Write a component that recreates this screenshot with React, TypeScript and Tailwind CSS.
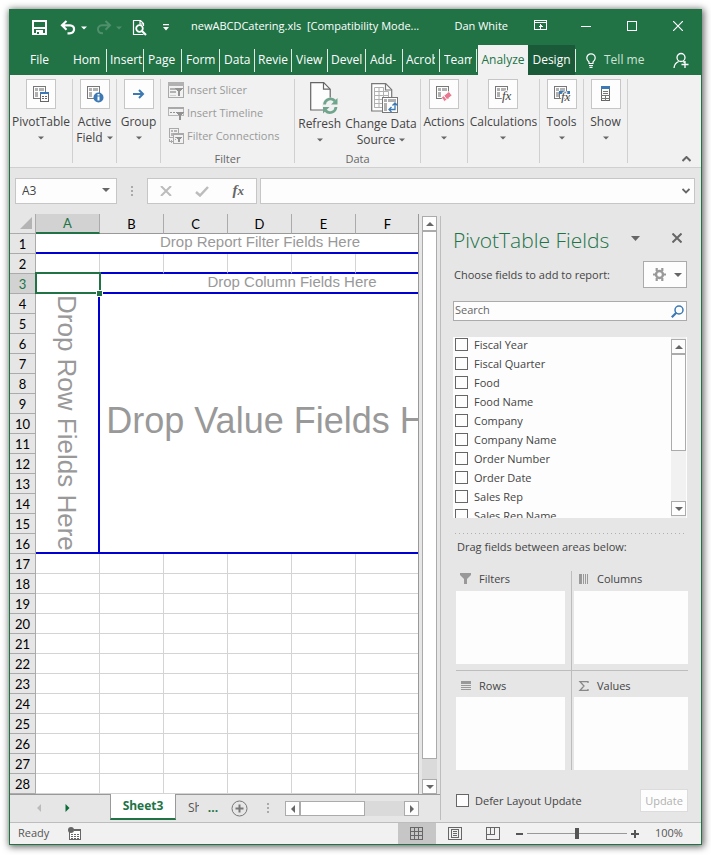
import React from "react";

const UI = "font-['Open_Sans','Noto_Sans',sans-serif]";

type P = { children?: React.ReactNode; className?: string };

/* ---------- small shared pieces ---------- */

function Caret({ className = "text-[#666]" }: { className?: string }) {
  return (
    <svg className={`inline-block shrink-0 ${className}`} width="6" height="4" viewBox="0 0 6 4" fill="currentColor" aria-hidden="true">
      <path d="M0 0.5h6L3 3.5z" />
    </svg>
  );
}

function BigCaret({ className = "text-[#666]" }: { className?: string }) {
  return (
    <svg className={`shrink-0 ${className}`} width="9" height="5" viewBox="0 0 9 5" fill="currentColor" aria-hidden="true">
      <path d="M0 0h9L4.5 5z" />
    </svg>
  );
}

function PivotGrid({ children }: P) {
  return (
    <svg width="18" height="18" viewBox="0 0 18 18" aria-hidden="true">
      <g shapeRendering="crispEdges">
        <path d="M1.5 1.5h12v12h-12z" fill="#fdfdfd" stroke="#777" />
        <path d="M3 3h3v3H3zM7 3h5v3H7zM3 7h3v5H3z" fill="#b1b1b1" />
      </g>
      {children}
    </svg>
  );
}

function Fx({ x, y, size }: { x: number; y: number; size: number }) {
  return (
    <text x={x} y={y} fontSize={size} fontStyle="italic" fill="#444" stroke="#fdfdfd" strokeWidth="2" paintOrder="stroke" className="font-['Liberation_Serif',serif]">
      fx
    </text>
  );
}

/* ---------- title bar ---------- */

function TitleBar() {
  return (
    <header className="flex h-[35px] items-center text-white">
      <button aria-label="Save" className="ml-[22px]">
        <svg width="15" height="15" viewBox="0 0 15 15" fill="none" stroke="#fff" shapeRendering="crispEdges">
          <path d="M1 1h13v13H1z" strokeWidth="2" />
          <path d="M2 7h11v2H2z" fill="#fff" stroke="none" />
          <path d="M4 10h7v4H4z" fill="#fff" stroke="none" />
          <path d="M5 11.5h2v2.5H5z" fill="#217346" stroke="none" />
        </svg>
      </button>
      <button aria-label="Undo" className="ml-[13px]">
        <svg width="16" height="15" viewBox="0 0 16 15" fill="none" stroke="#fff" strokeWidth="2.2">
          <path d="M6.5 1 2 5.3l4.500 4.500M2.500 5.300H10c5.500 0 5.500 8-.500 8H7.500" />
        </svg>
      </button>
      <button aria-label="Undo history" className="ml-[5px] flex"><Caret className="text-white" /></button>
      <button aria-label="Redo" className="ml-[9px]">
        <svg width="16" height="15" viewBox="0 0 16 15" fill="none" stroke="#4f8f6b" strokeWidth="2">
          <path d="M9.500 1 14 5.300 9.500 9.800M13.500 5.300H6c-5.500 0-5.500 8 .500 8H7" />
        </svg>
      </button>
      <button aria-label="Redo history" className="ml-[4px] flex"><Caret className="text-[#4f8f6b]" /></button>
      <button aria-label="Print preview" className="ml-[10px]">
        <svg width="15" height="17" viewBox="0 0 15 17" fill="none" stroke="#fff">
          <path d="M11.500 15.500H1.500v-14h7l3 3V7M8 1.500V5h3.500" strokeWidth="1.200" />
          <circle cx="7.500" cy="9.500" r="3.300" strokeWidth="1.800" />
          <path d="m10 12 4 4" strokeWidth="2.200" />
        </svg>
      </button>
      <button aria-label="Customize toolbar" className="ml-[16px]">
        <svg width="6" height="7" viewBox="0 0 6 7" fill="#fff"><path d="M0 0h6v1.200H0zM0 3h6L3 6.500z" /></svg>
      </button>
      <h1 className="ml-[22px] whitespace-pre pb-1 text-[11px] leading-4">newABCDCatering.xls  [Compatibility Mode...</h1>
      <div className="flex-1" />
      <div className="flex items-center pb-1">
        <button className="mr-[26px] whitespace-nowrap text-[11px] leading-4">Dan White</button>
        <button aria-label="Ribbon display options" className="mr-[34px]">
          <svg width="13" height="11" viewBox="0 0 13 11" fill="none" stroke="#fff" shapeRendering="crispEdges">
            <path d="M.500.500h12v9H.500zM.500 2.500h12" /><path d="M6.500 4v5M4.500 6.500h4M5.500 5.500h2" />
          </svg>
        </button>
        <button aria-label="Minimize" className="mr-9"><svg width="10" height="10" viewBox="0 0 10 10" shapeRendering="crispEdges"><path d="M0 5h10v1H0z" fill="#fff" /></svg></button>
        <button aria-label="Maximize" className="mr-9"><svg width="10" height="10" viewBox="0 0 10 10" fill="none" stroke="#fff" shapeRendering="crispEdges"><path d="M.500.500h9v9h-9z" /></svg></button>
        <button aria-label="Close" className="mr-[18px]"><svg width="10" height="10" viewBox="0 0 10 10" stroke="#fff" strokeWidth="1.200"><path d="m0 0 10 10M10 0 0 10" /></svg></button>
      </div>
    </header>
  );
}

/* ---------- ribbon tabs ---------- */

const tabs: [string, string][] = [
  ["Hom", "w-[38px] pl-1"],
  ["Insert", "w-[37px] pl-[3px]"],
  ["Page", "w-[38px] pl-1"],
  ["Form", "w-[38px] pl-1"],
  ["Data", "w-[35px] pl-1"],
  ["Revie", "w-[37px] pl-[3px]"],
  ["View", "w-[36px] pl-1"],
  ["Devel", "w-[38px] pl-[3px]"],
  ["Add-", "w-[37px] pl-1"],
  ["Acrob", "w-[37px] pl-[3px] pr-1"],
  ["Team", "w-[37px] pl-1 pr-1"],
];

function RibbonTabs() {
  return (
    <nav className="flex h-[30px] items-center text-[12px] leading-4 text-white">
      <button className="w-[59px]">File</button>
      {tabs.map(([label, box]) => (
        <button key={label} className={`h-[23px] shrink-0 border-r border-[#dfeae3] text-left ${box}`}>
          <span className="block overflow-hidden whitespace-nowrap">{label}</span>
        </button>
      ))}
      <button className="ml-px h-full w-[50px] shrink-0 bg-[#f1f1f1] text-center text-[#217346]">Analyze</button>
      <button className="h-full w-[47px] shrink-0 bg-[#1b5a38] text-center">Design</button>
      <span className="h-[23px] w-px bg-[#dfeae3]" />
      <button className="ml-[10px] flex items-center gap-2 whitespace-nowrap text-[#cfe3d7]">
        <svg width="10" height="15" viewBox="0 0 10 15" fill="none" stroke="#fff" strokeWidth="1.200">
          <path d="M3 10.500V9C1.500 7.800.800 6.800.800 5a4.200 4.200 0 0 1 8.400 0c0 1.800-.700 2.800-2.200 4v1.500zM3 12.500h4M3.500 14.300h3" />
        </svg>
        Tell me
      </button>
      <div className="flex-1" />
      <button aria-label="Share" className="mr-3">
        <svg width="16" height="17" viewBox="0 0 16 17" fill="none" stroke="#fff" strokeWidth="1.300">
          <circle cx="8" cy="5.500" r="4" /><path d="M1 16c.400-3.500 2-5.500 4.700-6.500M10 9.500l1.500 1M8.500 12.500h7M12 9v7" />
        </svg>
      </button>
    </nav>
  );
}

/* ---------- ribbon ---------- */

function Group({ children, className }: P) {
  return <section className={`flex h-[84px] shrink-0 justify-center border-r border-[#d0d0d0] ${className}`}>{children}</section>;
}

function BoxButton({ icon, lines }: { icon: React.ReactNode; lines: string[] }) {
  return (
    <button className="flex flex-col items-center self-start whitespace-nowrap text-[12px] leading-4">
      <span className="mb-[5px] flex h-[30px] w-[30px] items-center justify-center border border-[#c6c6c6] bg-[#fdfdfd]">{icon}</span>
      <span>{lines[0]}</span>
      <span className="flex h-4 items-center gap-1">{lines[1]}<Caret /></span>
    </button>
  );
}

function GroupLabel({ children }: P) {
  return <span className="text-center text-[11px] leading-2 text-[#666]">{children}</span>;
}

const filterItems = [
  {
    label: "Insert Slicer",
    icon: (
      <svg width="16" height="16" viewBox="0 0 16 16" shapeRendering="crispEdges">
        <path d="M.500.500h15v15H.500z" fill="#f1f1f1" stroke="#a9a9a9" /><path d="M0 0h16v4H0zM2 6h6v2H2zM2 9h6v2H2z" fill="#b1b1b1" />
        <path d="M2 13h6v1H2z" fill="#d0d0d0" />
        <path d="M7 6h8v1h-1v1h-1v1h-1v5h-2V9H9V8H8V7H7z" fill="#929292" />
      </svg>
    ),
  },
  {
    label: "Insert Timeline",
    icon: (
      <svg width="16" height="16" viewBox="0 0 16 16" shapeRendering="crispEdges">
        <path d="M.500 2.500h15v8H.500z" fill="#f1f1f1" stroke="#b5b5b5" /><path d="M0 2h16v2H0z" fill="#a9a9a9" />
        <path d="M2 7h2v1H2zM5 7h2v1H5zM8 7h2v1H8z" fill="#929292" />
        <path d="M8 7h8v1h-1v1h-1v1h-1v5h-2v-5h-1V9H9V8H8z" fill="#929292" />
      </svg>
    ),
  },
  {
    label: "Filter Connections",
    icon: (
      <svg width="16" height="16" viewBox="0 0 16 16" shapeRendering="crispEdges">
        <path d="M1.500.500h9v9h-9z" fill="#f1f1f1" stroke="#a9a9a9" /><path d="M3 2h2v2H3zM6 2h3v2H6zM3 5h2v3H3z" fill="#b5b5b5" />
        <path d="M5.500 5.500h10v10h-10z" fill="#f1f1f1" stroke="#a9a9a9" /><path d="M5 5h11v2H5zM7 9h1v1H7zM7 11h1v1H7z" fill="#a9a9a9" />
        <path d="M8 9h6v1h-1v1h-1v3h-2v-3H9v-1H8z" fill="#929292" /><path d="M1.500 11v2.500h3M3.500 12v3" fill="none" stroke="#a9a9a9" />
      </svg>
    ),
  },
];

function Ribbon() {
  return (
    <div className="flex h-[93px] border-b border-[#d0d0d0] bg-[#f1f1f1] pt-1 text-[#444]">
      <Group className="w-[63px]">
        <BoxButton lines={["PivotTable"]} icon={
          <PivotGrid>
            <g shapeRendering="crispEdges"><path d="M8.500 7.500h8v9h-8z" fill="#fdfdfd" stroke="#666" /><path d="M8 7h9v2H8z" fill="#3c78b4" /><path d="M10 11h2v1h-2zM13 11h2v1h-2zM10 13h2v1h-2zM13 13h2v1h-2z" fill="#666" /></g>
          </PivotGrid>} />
      </Group>
      <Group className="w-[44px]">
        <BoxButton lines={["Active", "Field"]} icon={
          <PivotGrid>
            <circle cx="12.500" cy="12.500" r="5" fill="#3c78b4" /><path d="M11.500 11.500h2v4h-2zM11.500 9h2v1.500h-2z" fill="#fff" />
          </PivotGrid>} />
      </Group>
      <Group className="w-[44px]">
        <BoxButton lines={["Group"]} icon={
          <svg width="12" height="10" viewBox="0 0 12 10" fill="none" stroke="#3c78b4" strokeWidth="2"><path d="M0 5h10M6 1l4 4-4 4" /></svg>} />
      </Group>
      <Group className="w-[134px] flex-col">
        <div className="-mt-px flex flex-1 flex-col pl-[7px] text-[11px] leading-4 text-[#999]">
          {filterItems.map((f) => (
            <button key={f.label} className="flex h-[23px] items-center gap-[3px] whitespace-nowrap">{f.icon}{f.label}</button>
          ))}
        </div>
        <GroupLabel>Filter</GroupLabel>
      </Group>
      <Group className="w-[126px] flex-col">
        <div className="flex flex-1 justify-center gap-1 text-[12px] leading-4">
          <button className="flex flex-col items-center self-start whitespace-nowrap">
            <svg className="mb-[1px] ml-2 mt-[3px]" width="28" height="33" viewBox="0 0 28 33">
              <path d="M.700.700h13l6.500 6.500V28H.700z" fill="#fdfdfd" stroke="#666" strokeWidth="1.200" /><path d="M13.500.700v6.500h6.500" fill="none" stroke="#666" strokeWidth="1.200" />
              <circle cx="20" cy="23.500" r="8" fill="#f1f1f1" />
              <path d="M14.500 22.500a6 6 0 0 1 10.500-3.500M26 25a6 6 0 0 1-10.500 3.500" fill="none" stroke="#6fa58c" strokeWidth="2.800" />
              <path d="M27.500 16v6.500H21zM13 31.500V25h6.500z" fill="#6fa58c" />
            </svg>
            <span>Refresh</span>
            <span className="flex h-4 items-center"><Caret /></span>
          </button>
          <button className="flex flex-col items-center self-start whitespace-nowrap">
            <svg className="mb-[1px] mt-[3px] ml-2" width="28" height="33" viewBox="0 0 28 33">
              <path d="M.700 1.700h14l6 6V29H.700z" fill="#fdfdfd" stroke="#777" strokeWidth="1.200" /><path d="M14.500 1.700V8h6" fill="none" stroke="#777" strokeWidth="1.200" />
              <path d="M3.500 5.500h9v20h-9zM3.500 9.500h14v16h-14M3.500 13.500h14M3.500 17.500h14M3.500 21.500h14M8 5.500v20M12.500 5.500v20" fill="none" stroke="#b0b0b0" />
              <path d="M11.500 15.500h15v15h-15z" fill="#fdfdfd" stroke="#777" shapeRendering="crispEdges" /><path d="M13 17h3v3h-3zM17 17h8v3h-8zM13 21h3v8h-3z" fill="#b0b0b0" />
              <path d="M24 21.500v6h-6M21.500 23.500l2.500-2.500 2.500 2.500M20.500 25l-2.500 2.500 2.500 2.500" fill="none" stroke="#3c78b4" strokeWidth="1.300" />
            </svg>
            <span>Change Data</span>
            <span className="flex h-4 items-center gap-1">Source<Caret /></span>
          </button>
        </div>
        <GroupLabel>Data</GroupLabel>
      </Group>
      <Group className="w-[47px]">
        <BoxButton lines={["Actions"]} icon={
          <PivotGrid><path d="m6.500 12.500 7.500-6 3 4-7.500 6z" fill="#e8798f" stroke="#fdfdfd" strokeWidth=".800" /><path d="m8.800 10.500 3 4" stroke="#fdfdfd" /></PivotGrid>} />
      </Group>
      <Group className="w-[72px]">
        <BoxButton lines={["Calculations"]} icon={<PivotGrid><Fx x={8} y={15} size={13} /></PivotGrid>} />
      </Group>
      <Group className="w-[44px]">
        <BoxButton lines={["Tools"]} icon={<PivotGrid><path d="M6.500 6.500h10v7h-10z" fill="#fdfdfd" stroke="#777" /><path d="M6 6h11v3H6z" fill="#3c78b4" /><Fx x={8} y={16} size={13} /></PivotGrid>} />
      </Group>
      <Group className="w-[44px]">
        <BoxButton lines={["Show"]} icon={
          <svg width="10" height="16" viewBox="0 0 10 16" shapeRendering="crispEdges">
            <path d="M.500.500h8v14h-8z" fill="#fdfdfd" stroke="#666" /><path d="M0 0h9v3H0z" fill="#3c78b4" />
            <path d="M2 5.500h5M2 7.500h5M0 9.500h9M0 12.500h9M4.500 9.500v5" fill="none" stroke="#777" />
          </svg>} />
      </Group>
      <div className="flex-1" />
      <button aria-label="Collapse the ribbon" className="mb-[5px] mr-[10px] self-end">
        <svg width="9" height="6" viewBox="0 0 9 6" fill="none" stroke="#666" strokeWidth="2"><path d="m.500 5 4-4 4 4" /></svg>
      </button>
    </div>
  );
}

/* ---------- formula bar ---------- */

function Dots() {
  return (
    <svg width="2" height="10" viewBox="0 0 2 10" fill="#aaa" shapeRendering="crispEdges" aria-hidden="true"><path d="M0 0h2v2H0zM0 4h2v2H0zM0 8h2v2H0z" /></svg>
  );
}

function FormulaBar() {
  return (
    <div className="flex h-[46px] items-start pl-[5px] pr-[6px] pt-[10px]">
      <div className="flex h-[26px] w-[102px] items-center border border-[#c6c6c6] bg-[#fdfdfd] pr-[6px]">
        <input aria-label="Name Box" defaultValue="A3" className="min-w-0 flex-1 bg-transparent pl-[6px] text-[12px] leading-4 text-[#444] outline-none" />
        <button aria-label="Open name list" className="pb-0.5"><svg width="8" height="4" fill="#666"><path d="M0 0h8L4 4z" /></svg></button>
      </div>
      <div className="flex h-[26px] w-[30px] items-center justify-center"><Dots /></div>
      <div className="flex h-[26px] w-[110px] items-center justify-between border border-[#c6c6c6] bg-[#fdfdfd] px-[12px]">
        <button aria-label="Cancel"><svg width="12" height="10" viewBox="0 0 12 10" stroke="#bcbcbc" strokeWidth="2"><path d="m1 0 10 10M11 0 1 10" /></svg></button>
        <button aria-label="Enter"><svg width="14" height="11" viewBox="0 0 14 11" fill="none" stroke="#bcbcbc" strokeWidth="2.500"><path d="m1 6 4 3.500L13 1" /></svg></button>
        <button aria-label="Insert Function" className="pb-0.5 font-['Liberation_Serif',serif] text-[15px] font-bold italic leading-5 text-[#666]">f<span className="text-[13px]">x</span></button>
      </div>
      <div className="ml-[3px] flex h-[26px] min-w-0 flex-1 items-center border border-[#c6c6c6] bg-[#fdfdfd] pr-1">
        <input aria-label="Formula" className="min-w-0 flex-1 bg-transparent pl-1 text-[12px] outline-none" />
        <button aria-label="Expand formula bar"><svg width="8" height="6" viewBox="0 0 8 6" fill="none" stroke="#666" strokeWidth="1.800"><path d="m.500 1 3.500 3.500L7.500 1" /></svg></button>
      </div>
    </div>
  );
}

/* ---------- worksheet ---------- */

const columns = ["A", "B", "C", "D", "E", "F", ""];
const rows = Array.from({ length: 28 }, (_, i) => i + 1);
const ARIAL = "font-['Liberation_Sans',Arial,sans-serif] text-[#999]";

function RowCells({ row }: { row: number }) {
  if (row === 1) {
    return <td colSpan={7} className={`border-b-2 border-[#0000d0] p-0 text-center align-top text-[15px] leading-4 ${ARIAL}`}>Drop Report Filter Fields Here</td>;
  }
  if (row === 2) {
    return <>{columns.map((c) => <td key={c} className="border-b-2 border-r border-b-[#0000d0] border-r-[#d4d4d4] p-0" />)}</>;
  }
  if (row === 3) {
    return (
      <>
        <td className="relative p-0">
          <div className="absolute -left-px -right-px -top-0.5 bottom-0 border-2 border-[#217346]" />
          <div className="absolute -bottom-[3px] -right-[3px] z-10 h-[7px] w-[7px] border border-white bg-[#217346]" />
        </td>
        <td colSpan={6} className={`border-b-2 border-[#0000d0] p-0 text-center align-top text-[15px] leading-4 ${ARIAL}`}>Drop Column Fields Here</td>
      </>
    );
  }
  if (row === 4) {
    return (
      <>
        <td rowSpan={13} className={`border-b-2 border-r-2 border-[#0000d0] p-0 ${ARIAL}`}>
          <div className="ml-auto mr-auto w-8 whitespace-nowrap text-center text-[26px] leading-8 [writing-mode:vertical-rl]">Drop Row Fields Here</div>
        </td>
        <td rowSpan={13} colSpan={6} className={`whitespace-nowrap border-b-2 border-[#0000d0] p-0 pb-1 text-center text-[36px] leading-10 ${ARIAL}`}>Drop Value Fields Here</td>
      </>
    );
  }
  if (row <= 16) return null;
  return <>{columns.map((c) => <td key={c} className="border-b border-r border-[#d4d4d4] p-0" />)}</>;
}

function Sheet() {
  return (
    <div className="min-w-0 flex-1 overflow-hidden border-r border-[#999]">
      <table className="w-[474px] table-fixed border-separate border-spacing-0 bg-white font-['Lato','Carlito',sans-serif] text-[13px] leading-4 text-black">
        <thead>
          <tr className="h-5">
            <th className="w-[26px] border-b border-r border-[#ababab] bg-[#e6e6e6] p-0 pb-1 pr-[3px] align-bottom">
              <svg className="ml-auto" width="12" height="12" viewBox="0 0 12 12"><path d="M12 0v12H0z" fill="#b4b4b4" /></svg>
            </th>
            {columns.map((c) => (
              <th key={c} scope="col" className={`w-16 border-r border-r-[#ababab] p-0 font-normal ${c === "A" ? "border-b-2 border-b-[#217346] bg-[#d2d2d2] text-[#217346]" : "border-b border-b-[#999] bg-[#e6e6e6]"}`}>{c}</th>
            ))}
          </tr>
        </thead>
        <tbody>
          {rows.map((r) => (
            <tr key={r} className="h-5">
              <th scope="row" className={`border-b border-r border-[#ababab] p-0 font-normal ${r === 3 ? "bg-[#d2d2d2] text-[#217346]" : "bg-[#e6e6e6]"}`}>{r}</th>
              <RowCells row={r} />
            </tr>
          ))}
        </tbody>
      </table>
    </div>
  );
}

const arrows = {
  up: "M4 0 8 4H0z",
  down: "M0 0h8L4 4z",
  left: "M4 0v8L0 4z",
  right: "M0 0v8l4-4z",
};

function ScrollButton({ dir }: { dir: keyof typeof arrows }) {
  const vertical = dir === "up" || dir === "down";
  return (
    <button aria-label={`Scroll ${dir}`} className="flex h-[15px] w-[15px] shrink-0 items-center justify-center border border-[#ababab] bg-[#fdfdfd]">
      <svg width={vertical ? 8 : 4} height={vertical ? 4 : 8} fill="#666"><path d={arrows[dir]} /></svg>
    </button>
  );
}

function SheetTabs() {
  return (
    <div className="flex h-7 items-start border-t border-[#999] text-[12px]">
      <button aria-label="Previous sheet" className="ml-[15px] flex h-[26px] w-7 items-center justify-center"><svg width="4" height="8" fill="#bbb"><path d={arrows.left} /></svg></button>
      <button aria-label="Next sheet" className="flex h-[26px] w-7 items-center justify-center"><svg width="5" height="8" viewBox="0 0 4 8" fill="#0b6b3a"><path d={arrows.right} /></svg></button>
      <button className="-mt-px ml-[29px] h-[26px] w-[66px] border-x border-b-2 border-x-[#999] border-b-[#217346] bg-white font-bold leading-5 text-[#217346]">Sheet3</button>
      <button className="ml-3 h-[26px] w-[11px] overflow-hidden text-left text-[#555]">Sh</button>
      <button aria-label="More sheets" className="ml-2 h-[26px] w-3 font-bold text-[#217346]">...</button>
      <button aria-label="New sheet" className="ml-3 mt-[5px]">
        <svg width="17" height="17" viewBox="0 0 17 17" fill="none" stroke="#777"><circle cx="8.500" cy="8.500" r="7.500" /><path d="M4.500 8.500h8M8.500 4.500v8" strokeWidth="2" /></svg>
      </button>
      <div className="ml-[19px] mt-2"><Dots /></div>
      <div className="ml-4 mr-[21px] mt-[6px] flex h-[15px] min-w-0 flex-1 bg-[#dadada]">
        <ScrollButton dir="left" />
        <div className="w-[65px] border border-[#ababab] bg-white" />
        <div className="flex-1" />
        <ScrollButton dir="right" />
      </div>
    </div>
  );
}

/* ---------- field pane ---------- */

const fields = ["Fiscal Year", "Fiscal Quarter", "Food", "Food Name", "Company", "Company Name", "Order Number", "Order Date", "Sales Rep", "Sales Rep Name"];

function Check({ label, className }: { label: string; className?: string }) {
  return (
    <label className={`flex items-center gap-[6px] whitespace-nowrap ${className}`}>
      <input type="checkbox" className="h-[13px] w-[13px] shrink-0 appearance-none border border-[#666] bg-[#fdfdfd]" />
      {label}
    </label>
  );
}

function Area({ label, icon, tall }: { label: string; icon: React.ReactNode; tall?: boolean }) {
  return (
    <div className="min-w-0">
      <div className={`flex items-center gap-2 pl-1 ${tall ? "h-[26px] pt-1" : "h-5 pb-1"}`}>{icon}{label}</div>
      <div className="h-[73px] bg-[#fdfdfd]" />
    </div>
  );
}

function FieldPane() {
  return (
    <aside className="my-0.5 w-[261px] shrink-0 border-l border-[#bdbdbd] pl-3 pr-[14px] text-[11px] leading-4 text-[#444]">
      <div className="mt-3 flex h-6 items-center">
        <h2 className="whitespace-nowrap text-[21px] font-light leading-6 text-[#217346]">PivotTable Fields</h2>
        <div className="flex-1" />
        <button aria-label="Pane options" className="mb-1 mr-8"><BigCaret /></button>
        <button aria-label="Close pane" className="mb-1 mr-[5px]"><svg width="10" height="10" viewBox="0 0 10 10" stroke="#666" strokeWidth="2"><path d="m.500.500 9 9M9.500.500l-9 9" /></svg></button>
      </div>
      <div className="mt-[9px] flex h-[27px] items-center justify-between">
        <p className="pl-px">Choose fields to add to report:</p>
        <button aria-label="Tools" className="flex h-[27px] w-11 items-center justify-between border border-[#ababab] bg-[#fdfdfd] pl-[9px] pr-1">
          <svg width="13" height="13" viewBox="0 0 13 13" fill="none" stroke="#999">
            <circle cx="6.500" cy="6.500" r="3.500" strokeWidth="2.400" />
            <path d="M3.700 0v3M9.300 0v3M3.700 10v3M9.300 10v3M0 6.500h2M11 6.500h2" strokeWidth="2.200" />
          </svg>
          <svg width="8" height="4" fill="#666"><path d={arrows.down} /></svg>
        </button>
      </div>
      <div className="mt-[13px] flex h-5 items-center border border-[#ababab] bg-[#fdfdfd] pr-0.5">
        <input aria-label="Search fields" placeholder="Search" className="min-w-0 flex-1 bg-transparent pb-0.5 pl-px text-[11px] leading-4 outline-none placeholder:text-[#666]" />
        <svg width="13" height="13" viewBox="0 0 13 13" fill="none" stroke="#3c78b4"><circle cx="8" cy="5" r="4" strokeWidth="1.500" /><path d="M5.500 7.500.800 12.200" strokeWidth="2.200" /></svg>
      </div>
      <div className="mt-4 flex h-[181px] overflow-hidden bg-[#fdfdfd]">
        <div className="h-full flex-1 overflow-hidden pl-0.5">
          {fields.map((f) => <Check key={f} label={f} className="h-[19px] pb-1" />)}
        </div>
        <div className="mr-px flex flex-col bg-[#f1f1f1] pb-0.5 pt-0.5">
          <ScrollButton dir="up" />
          <div className="h-[97px] border border-[#ababab] bg-[#fdfdfd]" />
          <div className="flex-1" />
          <ScrollButton dir="down" />
        </div>
      </div>
      <div className="ml-0.5 mt-[15px] h-px bg-[repeating-linear-gradient(90deg,#b0b0b0_0_1px,transparent_1px_4px)]" />
      <p className="ml-1 mt-[5px]">Drag fields between areas below:</p>
      <div className="-mr-px ml-[3px] mt-4">
        <div className="grid grid-cols-2 border-b border-[#bdbdbd]">
          <div className="border-r border-[#bdbdbd] pb-[6px] pr-[6px]">
            <Area label="Filters" icon={<svg width="11" height="12" fill="#999"><path d="M0 0h11v2L7 6v5H4V6L0 2z" /></svg>} />
          </div>
          <div className="pl-0.5">
            <Area label="Columns" icon={<svg width="11" height="11" fill="#999" shapeRendering="crispEdges"><path d="M1 0h3v10H1zM5 0h1v10H5zM7 0h1v10H7zM9 0h1v10H9z" /></svg>} />
          </div>
        </div>
        <div className="grid grid-cols-2">
          <div className="border-r border-[#bdbdbd] pr-[6px]">
            <Area tall label="Rows" icon={<svg width="11" height="10" fill="#999" shapeRendering="crispEdges"><path d="M1 0h10v3H1zM1 4h10v1H1zM1 6h10v1H1zM1 8h10v1H1z" /></svg>} />
          </div>
          <div className="pl-0.5">
            <Area tall label="Values" icon={<svg width="11" height="10" viewBox="0 0 11 10" fill="none" stroke="#888" strokeWidth="1.300"><path d="M10 2V.700H2L6 5 2 9.300h8V8" /></svg>} />
          </div>
        </div>
      </div>
      <div className="-mr-px ml-[3px] mt-[19px] flex h-[23px] items-center justify-between">
        <Check label="Defer Layout Update" />
        <button disabled className="h-[23px] w-12 border border-[#dcdcdc] bg-[#fdfdfd] text-[#b1b1b1]">Update</button>
      </div>
    </aside>
  );
}

/* ---------- status bar ---------- */

function StatusBar() {
  return (
    <footer className="flex h-[22px] items-center border-t border-[#bdbdbd] bg-[#f1f1f1] text-[11px] leading-4 text-[#555]">
      <span className="w-[58px] pb-0.5 pl-2">Ready</span>
      <button aria-label="Record macro">
        <svg width="13" height="14" viewBox="0 0 13 14" shapeRendering="crispEdges">
          <path d="M1.500 2.500h11v10h-11z" fill="#fdfdfd" stroke="#666" /><path d="M6 2h7v2H6z" fill="#666" />
          <path d="M3 7h2v1H3zM6 7h2v1H6zM9 7h2v1H9zM3 9h2v1H3zM6 9h2v1H6zM9 9h2v1H9zM3 11h2v1H3zM6 11h2v1H6zM9 11h2v1H9z" fill="#666" />
          <circle cx="3" cy="3" r="3" fill="#666" shapeRendering="auto" />
        </svg>
      </button>
      <div className="flex-1" />
      <button aria-label="Normal view" className="flex h-full w-[38px] items-center justify-center bg-[#c6c6c6]">
        <svg width="14" height="13" viewBox="0 0 14 13" fill="none" stroke="#666" shapeRendering="crispEdges"><path d="M.500.500h12v12H.500zM.500 4.500h12M.500 8.500h12M4.500.500v12M8.500.500v12" /></svg>
      </button>
      <button aria-label="Page layout view" className="flex h-full w-[38px] items-center justify-center">
        <svg width="14" height="13" viewBox="0 0 14 13" fill="none" stroke="#666" shapeRendering="crispEdges"><path d="M.500.500h13v12H.500zM3.500 2.500h7v8h-7zM5 4.500h4M5 6.500h4M5 8.500h4" /></svg>
      </button>
      <button aria-label="Page break preview" className="flex h-full w-[38px] items-center justify-center">
        <svg width="14" height="13" viewBox="0 0 14 13" fill="none" stroke="#666" shapeRendering="crispEdges"><path d="M.500.500h13v12H.500zM4.500.500v7M8.500.500v7M.500 7.500h8" /></svg>
      </button>
      <button aria-label="Zoom out" className="ml-1"><svg width="7" height="2"><path d="M0 0h7v2H0z" fill="#555" /></svg></button>
      <input
        type="range"
        aria-label="Zoom"
        defaultValue={50}
        className="mx-1 h-[11px] w-[100px] appearance-none bg-[linear-gradient(#999,#999)] bg-[length:100%_1px] bg-center bg-no-repeat [&::-webkit-slider-thumb]:h-[11px] [&::-webkit-slider-thumb]:w-1 [&::-webkit-slider-thumb]:appearance-none [&::-webkit-slider-thumb]:bg-[#555]"
      />
      <button aria-label="Zoom in"><svg width="8" height="8" fill="#555"><path d="M3 0h2v8H3zM0 3h8v2H0z" /></svg></button>
      <span className="w-[62px] pb-0.5 pl-4">100%</span>
    </footer>
  );
}

export default function App() {
  return (
    <div className={`min-h-screen bg-white px-[9px] pb-[10px] pt-[9px] ${UI}`}>
      <div className="flex flex-col border border-[#217346] bg-[#e6e6e6] shadow-[1px_1px_7px_1px_rgba(0,0,0,0.6)]">
        <div className="bg-[#217346]">
          <TitleBar />
          <RibbonTabs />
        </div>
        <Ribbon />
        <FormulaBar />
        <main className="flex">
          <div className="flex min-w-0 flex-1 flex-col">
            <div className="flex">
              <Sheet />
              <div className="mx-[3px] mt-0.5 flex w-[15px] flex-col bg-[#dadada]">
                <ScrollButton dir="up" />
                <div className="h-[528px] border border-[#ababab] bg-white" />
                <div className="flex-1" />
                <ScrollButton dir="down" />
              </div>
            </div>
            <SheetTabs />
          </div>
          <FieldPane />
        </main>
        <StatusBar />
      </div>
    </div>
  );
}
